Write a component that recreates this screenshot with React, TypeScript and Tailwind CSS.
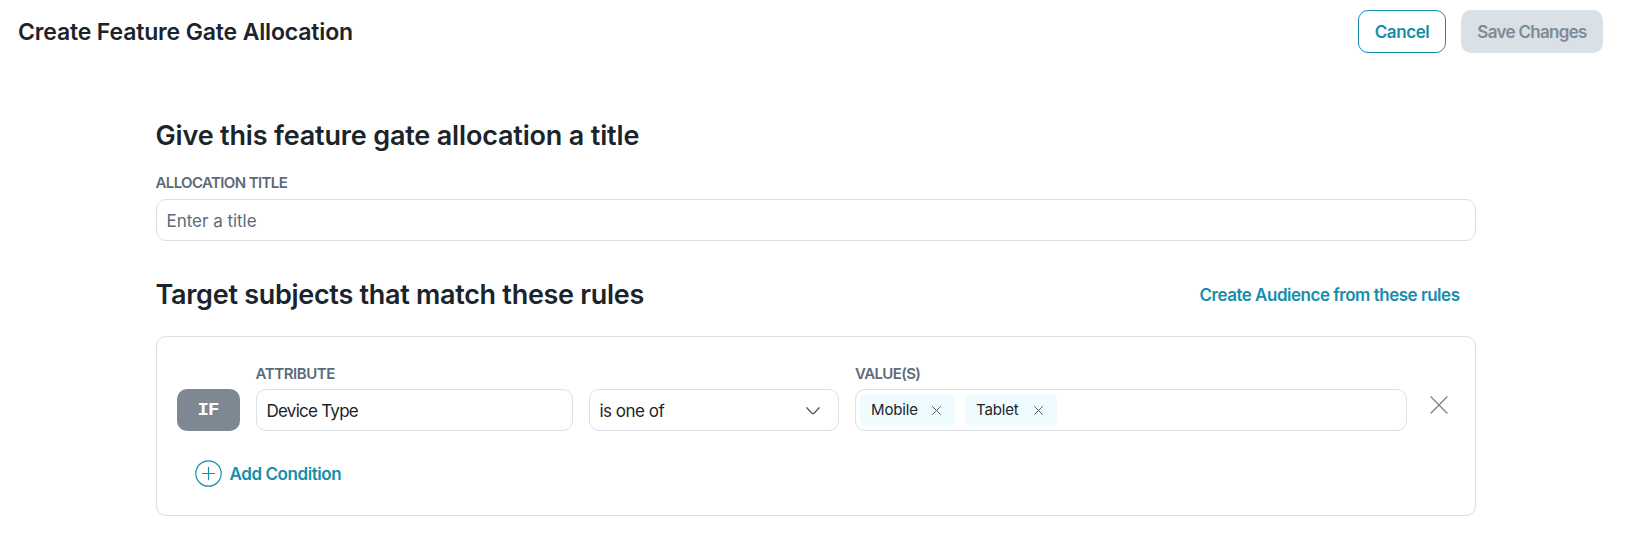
import React from "react";

function Label({ children }: { children: React.ReactNode }) {
  return (
    <div className="-mt-[2px] h-6 text-[15px] leading-[18px] font-semibold whitespace-nowrap text-[#5c6b78]">
      {children}
    </div>
  );
}

function Cross({ className }: { className: string }) {
  return (
    <svg viewBox="0 0 18 18" className={className} fill="none" stroke="currentColor">
      <path d="M0.6 0.6L17.4 17.4M17.4 0.6L0.6 17.4" vectorEffect="non-scaling-stroke" />
    </svg>
  );
}

function Chip({ text, className }: { text: string; className: string }) {
  return (
    <span className={`flex h-8 items-center justify-between rounded-[5px] bg-[#effbff] pr-[14px] pl-[11px] text-[15px] tracking-[-0.15px] text-[#1c242b] ${className}`}>
      <span className="whitespace-nowrap">{text}</span>
      <button aria-label={`Remove ${text}`}>
        <Cross className="h-[9px] w-[9px] stroke-1 text-[#4c5963]" />
      </button>
    </span>
  );
}

export default function App() {
  return (
    <div className="h-[534px] overflow-hidden bg-white font-['Inter',sans-serif] text-[#1c242b]">
      <header className="flex items-start justify-between pt-[10px] pr-[27px] pl-[18px]">
        <h1 className="pt-[7px] text-[23px] leading-[30px] font-semibold tracking-[-0.15px] whitespace-nowrap">
          <span>Create Feature Gate Allocation</span>
        </h1>
        <div className="flex gap-[15px] text-[17px] font-semibold">
          <button className="h-[43px] w-[88px] rounded-[10px] border border-[#168eaa] pt-[2px] tracking-[-0.4px] text-[#168eaa]">
            <span>Cancel</span>
          </button>
          <button className="h-[43px] w-[142px] rounded-[10px] bg-[#d9e0e6] pt-[2px] tracking-[-0.68px] whitespace-nowrap text-[#7f8b96]">
            <span>Save Changes</span>
          </button>
        </div>
      </header>

      <main className="ml-[155.5px] w-[1320px] pt-[66px]">
        <h2 className="h-[57px] text-[27px] leading-[34px] font-semibold tracking-[-0.17px] whitespace-nowrap">
          <span>Give this feature gate allocation a title</span>
        </h2>
        <Label>
          <span className="tracking-[-0.62px]">ALLOCATION TITLE</span>
        </Label>
        <div className="mt-px flex h-[42px] items-center rounded-[10px] border border-[#d9e0e6] px-[10px] pt-[3px] text-[17px] tracking-[-0.02px] text-[#5c6b78]">
          <span>Enter a title</span>
        </div>

        <div className="mt-[36px] flex h-[59px] items-start justify-between pr-4">
          <h2 className="text-[27px] leading-[36px] font-semibold tracking-[-0.29px] whitespace-nowrap">
            <span>Target subjects that match these rules</span>
          </h2>
          <button className="h-[38px] text-[17px] font-semibold tracking-[-0.49px] whitespace-nowrap text-[#168eaa]">
            <span>Create Audience from these rules</span>
          </button>
        </div>

        <section className="h-[180px] rounded-[10px] border border-[#d9e0e6] pt-[30px] pl-5">
          <div className="flex items-end">
            <div className="mr-4 flex h-[42px] w-[63px] items-center justify-center rounded-[10px] bg-[#7d8893] pt-px font-['Liberation_Mono',monospace] text-[19px] font-bold tracking-[-1px] text-white">
              IF
            </div>
            <div className="mr-4 w-[317px]">
              <Label>
                <span className="tracking-[-0.42px]">ATTRIBUTE</span>
              </Label>
              <div className="flex h-[42px] items-center rounded-[10px] border border-[#d9e0e6] px-[10px] pt-[3px] text-[17px] tracking-[-0.75px]">
                <span>Device Type</span>
              </div>
            </div>
            <div className="mr-4 flex h-[42px] w-[250.5px] items-center justify-between rounded-[10px] border border-[#d9e0e6] pr-[18.5px] pl-[10px] text-[17px]">
              <span className="pt-[3px] tracking-[-0.5px]">is one of</span>
              <svg viewBox="0 0 14 8" className="mt-0.5 h-2 w-[14px]" fill="none" stroke="#4c5963" strokeWidth="1.3" strokeLinecap="round">
                <path d="M0.8 0.8L6 6.2Q7 7.1 8 6.2L13.2 0.8" />
              </svg>
            </div>
            <div className="w-[552px]">
              <Label>
                <span className="tracking-[-0.62px]">VALUE(S)</span>
              </Label>
              <div className="flex h-[42px] items-center gap-[10px] rounded-[10px] border border-[#d9e0e6] px-1">
                <Chip text="Mobile" className="w-[95px]" />
                <Chip text="Tablet" className="w-[92px]" />
              </div>
            </div>
            <button aria-label="Remove condition" className="mb-[17px] ml-[22.5px]">
              <Cross className="h-[18px] w-[18px] stroke-[1.4] text-[#7d8893]" />
            </button>
          </div>
          <button className="mt-[29px] ml-[18px] flex items-center gap-2 text-[17px] font-semibold whitespace-nowrap text-[#168eaa]">
            <svg viewBox="0 0 27 27" className="h-[27px] w-[27px]" fill="none" stroke="currentColor" strokeWidth="1.2" strokeLinecap="round">
              <circle cx="13.5" cy="13.5" r="12.7" />
              <path d="M13.5 7.3V19.7M7.3 13.5H19.7" />
            </svg>
            <span className="pt-[2px] tracking-[-0.42px]">Add Condition</span>
          </button>
        </section>
      </main>
    </div>
  );
}
